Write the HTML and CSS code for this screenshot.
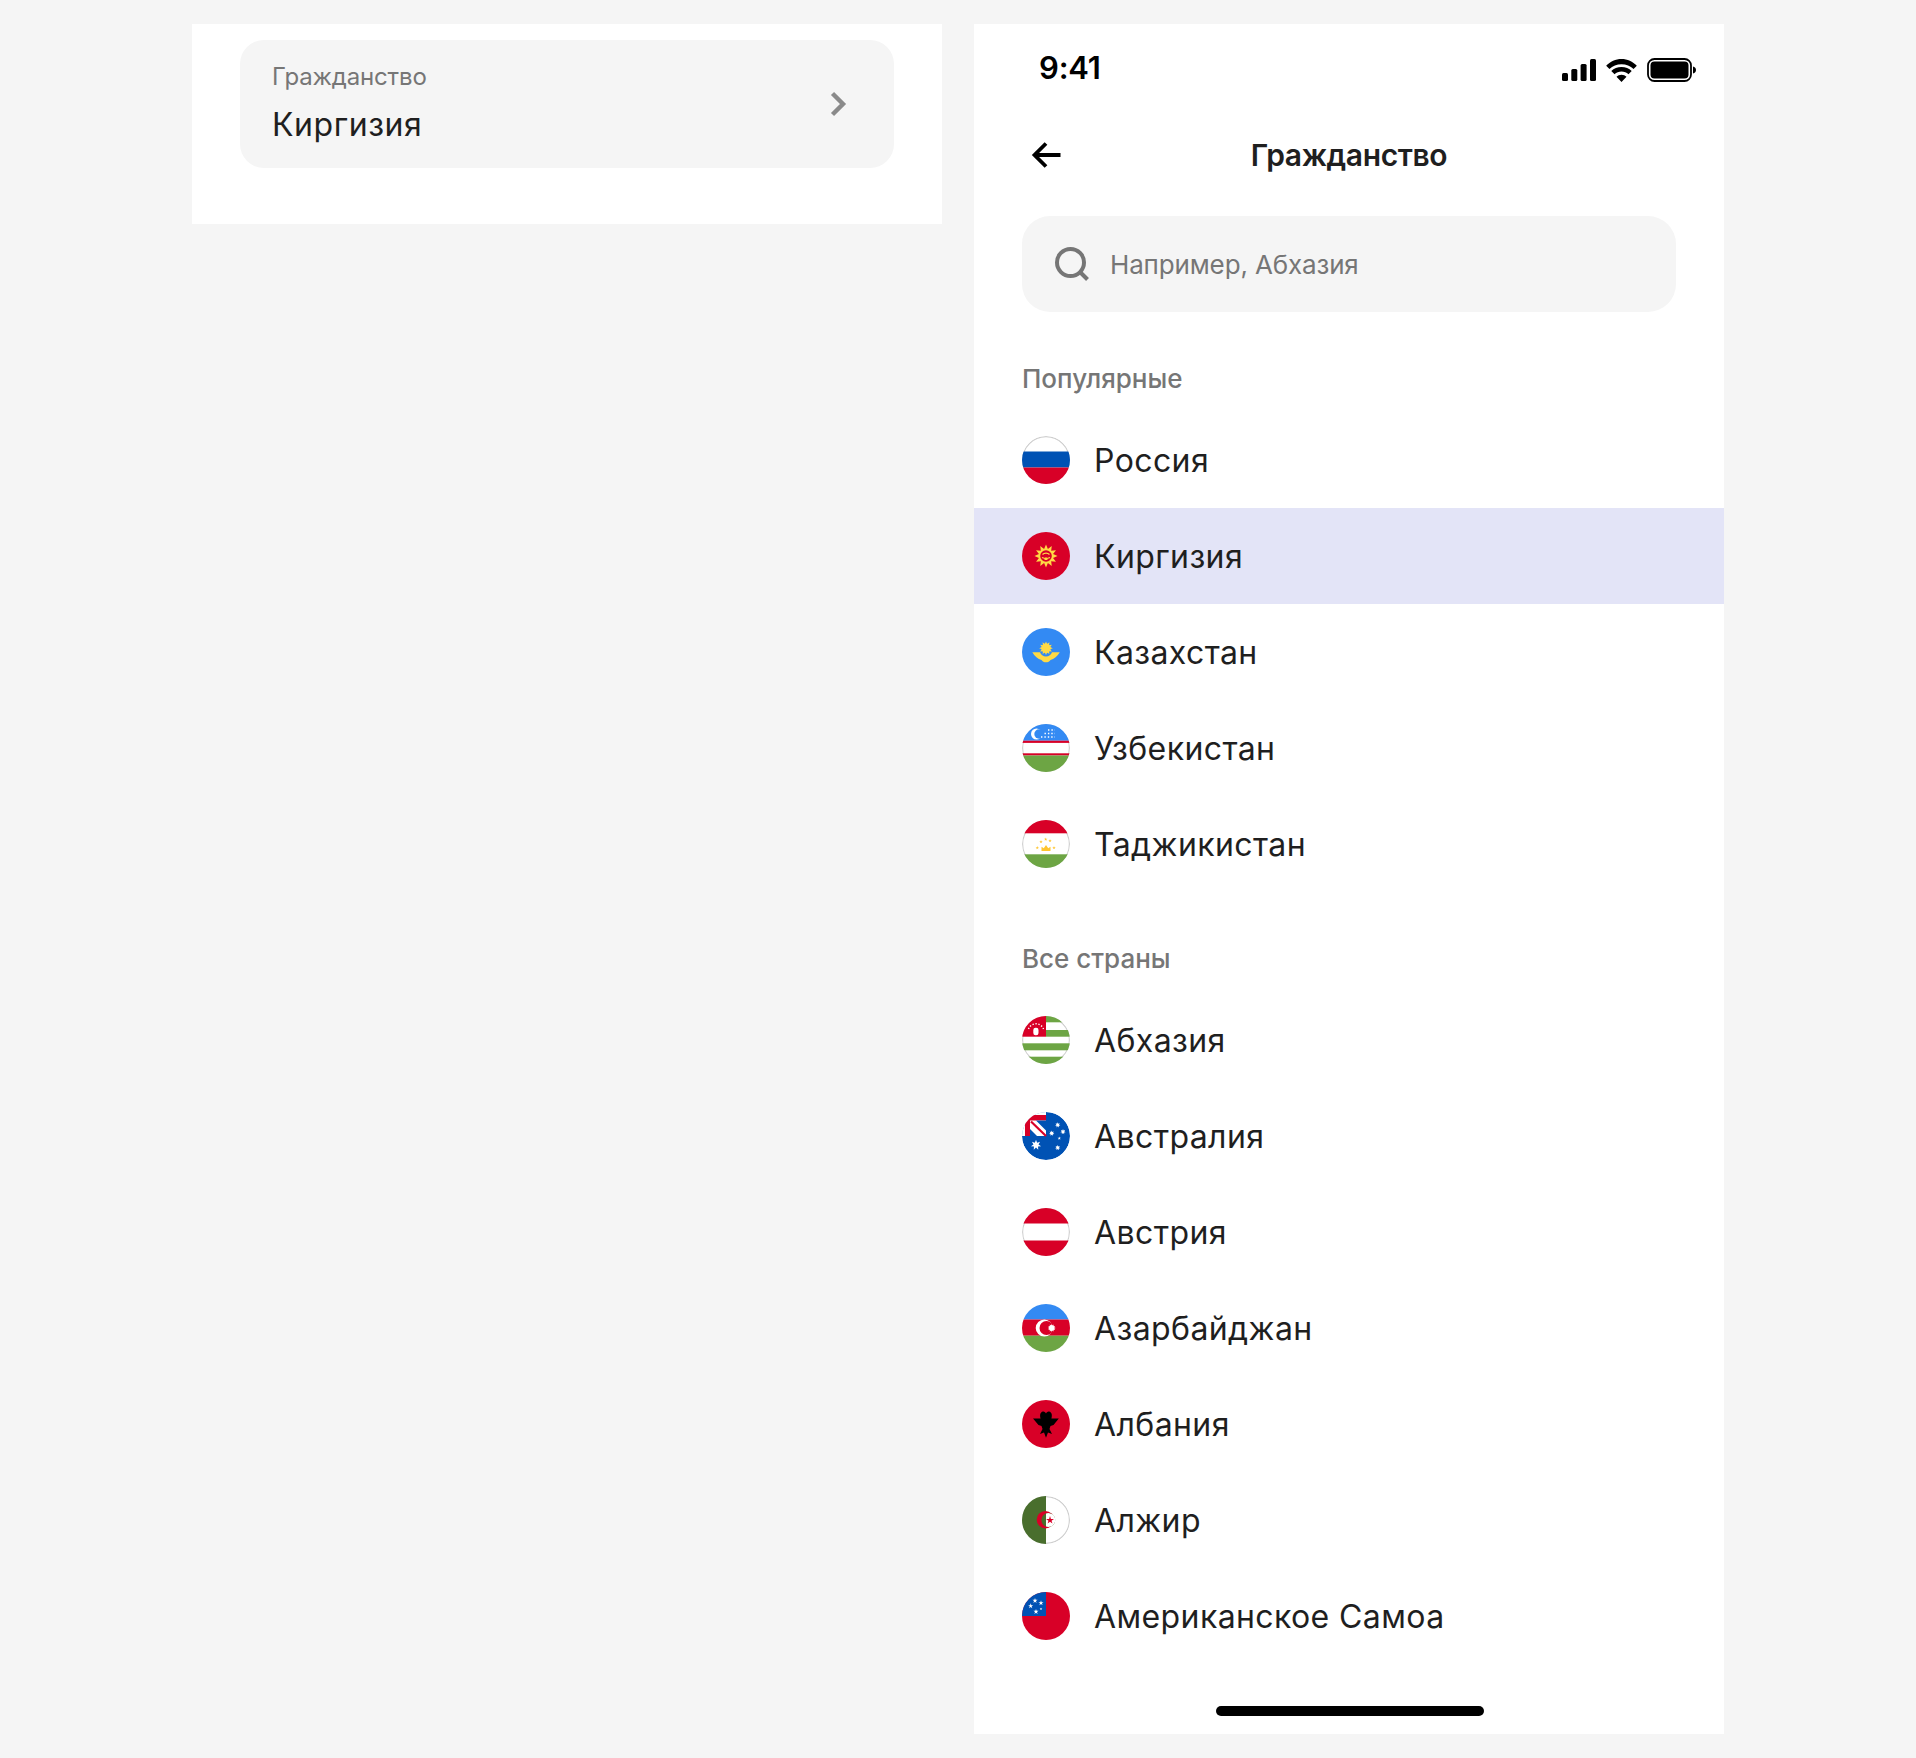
FILE: index.html
```html
<!DOCTYPE html>
<html lang="ru">
<head>
<meta charset="utf-8">
<title>Гражданство</title>
<link rel="stylesheet" href="styles.css">
</head>
<body>
<svg class="defs" aria-hidden="true">
  <defs>
    <polygon id="s12" points="0,-1 .165,-.614 .5,-.866 .45,-.45 .866,-.5 .614,-.165 1,0 .614,.165 .866,.5 .45,.45 .5,.866 .165,.614 0,1 -.165,.614 -.5,.866 -.45,.45 -.866,.5 -.614,.165 -1,0 -.614,-.165 -.866,-.5 -.45,-.45 -.5,-.866 -.165,-.614"/>
    <polygon id="s7" points="0,-1 .217,-.45 .782,-.623 .487,-.111 .975,.223 .391,.312 .434,.901 0,.5 -.434,.901 -.391,.312 -.975,.223 -.487,-.111 -.782,-.623 -.217,-.45"/>
    <polygon id="s5" points="0,-1 .223,-.307 .951,-.309 .361,.117 .588,.809 0,.38 -.588,.809 -.361,.117 -.951,-.309 -.223,-.307"/>
  </defs>
</svg>
<div class="stage">
  <section class="panel panel-left">
    <div class="field">
      <div class="field-text">
        <div class="field-label">Гражданство</div>
        <div class="field-value">Киргизия</div>
      </div>
      <svg class="chevron" viewBox="0 0 16 24"><path d="M2.500 1.500 13 12 2.500 22.500" fill="none" stroke="#8a8a8a" stroke-width="4.400"/></svg>
    </div>
  </section>

  <section class="panel panel-right">
    <div class="status">
      <span class="time">9:41</span>
      <div class="status-icons">
        <svg class="sig" viewBox="0 0 34 22"><rect x="0" y="14" width="6" height="8" rx="1.500"/><rect x="9.300" y="10" width="6" height="12" rx="1.500"/><rect x="18.600" y="5" width="6" height="17" rx="1.500"/><rect x="28" y="0" width="6" height="22" rx="1.500"/></svg>
        <svg class="wifi" viewBox="1 0.500 30 22.500"><path d="M16 5.600c4.600 0 8.700 1.800 11.800 4.700l3.200-3.100C27 3 21.800.6 16 .6S5 3 1 7.200l3.200 3.100C7.300 7.400 11.400 5.600 16 5.600z"/><path d="M16 12.800c2.600 0 5 1 6.800 2.700l3.200-3.200C23.400 9.800 19.900 8.300 16 8.300s-7.400 1.500-10 4l3.200 3.200c1.800-1.700 4.200-2.700 6.800-2.700z"/><path d="M16 15.800c-1.900 0-3.600.8-4.900 2L16 23l4.900-5.200c-1.300-1.200-3-2-4.900-2z"/></svg>
        <svg class="batt" viewBox="0 0 49 24"><rect x="1" y="1" width="43" height="22" rx="6.500" fill="none" stroke="#000" stroke-width="1.800"/><rect x="3.500" y="3.500" width="38" height="17" rx="4"/><path d="M46 8.500c1.800.5 3 1.800 3 3.500s-1.200 3-3 3.500z"/></svg>
      </div>
    </div>

    <header class="nav">
      <svg class="back" viewBox="0 0 32 32"><path d="M30.500 16H5M16 4.500 4.500 16 16 27.500" fill="none" stroke="#000" stroke-width="3.800"/></svg>
      <h1 class="nav-title">Гражданство</h1>
    </header>

    <div class="search">
      <svg class="search-icon" viewBox="0 0 36 36"><circle cx="16.500" cy="16.500" r="13.500" fill="none" stroke="#767676" stroke-width="4"/><path d="M26.500 26.500 33.500 33.500" stroke="#767676" stroke-width="4" fill="none"/></svg>
      <span class="search-text">Например, Абхазия</span>
    </div>

    <div class="section-label">Популярные</div>
    <ul class="list">
      <li class="row">
        <svg class="flag" viewBox="0 0 48 48"><rect width="48" height="48" fill="#fff"/><circle cx="24" cy="24" r="23.400" fill="none" stroke="#cfcfcf" stroke-width="1.200"/><rect y="15.500" width="48" height="16" fill="#0052b4"/><rect y="31.500" width="48" height="16.500" fill="#d80027"/></svg>
        <span>Россия</span>
      </li>
      <li class="row row-active">
        <svg class="flag" viewBox="0 0 48 48"><rect width="48" height="48" fill="#d80027"/><use href="#s12" transform="translate(24 24) scale(11.500)" fill="#ffda44"/><circle cx="24" cy="24" r="5.800" fill="#d80027"/><path d="M20.500 22.500c1.800-1.800 5.200-1.800 7 0M20 25.500l3 1M28 25.500l-3 1" fill="none" stroke="#ffda44" stroke-width="1.300"/><path d="M23 25.500h2l.6 2.500h-3.200z" fill="#ffda44"/></svg>
        <span>Киргизия</span>
      </li>
      <li class="row">
        <svg class="flag" viewBox="0 0 48 48"><rect width="48" height="48" fill="#338af3"/><use href="#s12" transform="translate(24 20.200) scale(6.800)" fill="#ffda44"/><circle cx="24" cy="20.200" r="4.600" fill="#ffda44"/><path d="M10.300 24.300H18C19 27 21 28.500 24 28.500S29 27 30 24.300H37.800C35.500 28.500 32 31 28.500 32 27.500 33.500 26 34.300 24 34.300S20.500 33.500 19.500 32C16 31 12.500 28.500 10.300 24.300z" fill="#ffda44"/></svg>
        <span>Казахстан</span>
      </li>
      <li class="row">
        <svg class="flag" viewBox="0 0 48 48"><rect width="48" height="48" fill="#fff"/><circle cx="24" cy="24" r="23.400" fill="none" stroke="#cfcfcf" stroke-width="1.200"/><rect width="48" height="16.700" fill="#338af3"/><rect y="16.700" width="48" height="2.200" fill="#d80027"/><rect y="29.300" width="48" height="2.200" fill="#d80027"/><rect y="31.500" width="48" height="16.500" fill="#6da544"/><circle cx="14.500" cy="10" r="5.500" fill="#fff"/><circle cx="17" cy="10" r="4.700" fill="#338af3"/><path d="M19 13H33M22.500 9.500H33M26 6H33" stroke="#fff" stroke-width="1.400" stroke-dasharray="1.400 2" fill="none"/></svg>
        <span>Узбекистан</span>
      </li>
      <li class="row">
        <svg class="flag" viewBox="0 0 48 48"><rect width="48" height="48" fill="#fff"/><circle cx="24" cy="24" r="23.400" fill="none" stroke="#cfcfcf" stroke-width="1.200"/><rect width="48" height="13.300" fill="#d80027"/><rect y="34.300" width="48" height="13.700" fill="#6da544"/><path d="M19.500 31V26.800l2.300 1.400L24 25l2.200 3.200 2.300-1.400V31z" fill="#ffc52e"/><g fill="#ffc52e"><use href="#s5" transform="translate(15.300 27.700) scale(1.800)"/><use href="#s5" transform="translate(19 21.700) scale(1.800)"/><use href="#s5" transform="translate(23.700 19.300) scale(1.800)"/><use href="#s5" transform="translate(28 20.700) scale(1.800)"/><use href="#s5" transform="translate(32 27.700) scale(1.800)"/></g></svg>
        <span>Таджикистан</span>
      </li>
    </ul>

    <div class="section-label">Все страны</div>
    <ul class="list">
      <li class="row">
        <svg class="flag" viewBox="0 0 48 48"><rect width="48" height="48" fill="#fff"/><circle cx="24" cy="24" r="23.400" fill="none" stroke="#cfcfcf" stroke-width="1.200"/><rect x="24" y="0" width="24" height="6.300" fill="#6da544"/><rect x="24" y="14" width="24" height="6.700" fill="#6da544"/><rect y="27.300" width="48" height="7" fill="#6da544"/><rect y="40.700" width="48" height="7.300" fill="#6da544"/><rect width="24" height="20.700" fill="#d80027"/><rect x="11.300" y="11.800" width="5.200" height="7.400" rx="2.300" fill="#fff"/><path d="M6.500 13A8 8 0 0 1 21.500 13" fill="none" stroke="#fff" stroke-width="1.400" stroke-dasharray="1.300 1.700"/></svg>
        <span>Абхазия</span>
      </li>
      <li class="row">
        <svg class="flag" viewBox="0 0 48 48"><circle cx="24" cy="24" r="24" fill="#0052b4"/><rect width="24" height="24" fill="#fff"/><path d="M3 24V8a5 5 0 0 1 5-5H24V24z" fill="#d80027"/><rect x="8" y="8.500" width="16" height="15.500" fill="#fff"/><path d="M14 8.500H24V18.500z" fill="#0052b4"/><path d="M8 17V24H15z" fill="#0052b4"/><path d="M9 9.500 24 24" stroke="#d80027" stroke-width="2.200"/><g fill="#fff"><use href="#s7" transform="translate(14 33) scale(5.200)"/><use href="#s7" transform="translate(35.700 13) scale(2.700)"/><use href="#s7" transform="translate(29.700 21.300) scale(2.700)"/><use href="#s7" transform="translate(41 19.700) scale(2.700)"/><use href="#s5" transform="translate(37.300 26.300) scale(1.800)"/><use href="#s7" transform="translate(35.700 35.700) scale(2.700)"/></g></svg>
        <span>Австралия</span>
      </li>
      <li class="row">
        <svg class="flag" viewBox="0 0 48 48"><rect width="48" height="48" fill="#fff"/><circle cx="24" cy="24" r="23.400" fill="none" stroke="#cfcfcf" stroke-width="1.200"/><rect width="48" height="15.500" fill="#d80027"/><rect y="32.500" width="48" height="15.500" fill="#d80027"/></svg>
        <span>Австрия</span>
      </li>
      <li class="row">
        <svg class="flag" viewBox="0 0 48 48"><rect width="48" height="15.500" fill="#338af3"/><rect y="15.500" width="48" height="16.200" fill="#d80027"/><rect y="31.700" width="48" height="16.300" fill="#6da544"/><circle cx="22.300" cy="24" r="8.600" fill="#fff"/><circle cx="24.500" cy="24" r="7" fill="#d80027"/><use href="#s12" transform="translate(29.700 24) scale(4)" fill="#fff"/><circle cx="29.700" cy="24" r="2.400" fill="#fff"/></svg>
        <span>Азарбайджан</span>
      </li>
      <li class="row">
        <svg class="flag" viewBox="0 0 48 48"><rect width="48" height="48" fill="#d80027"/><path d="M11 18.500 18.600 18.600C17.600 15.500 18 12 21 11.500 22.500 11.300 23.500 12.500 24 13.500 24.500 12.500 25.500 11.300 27 11.500 30 12 30.400 15.500 29.400 18.600L36.800 18.500 31.500 25 28.500 26 27.500 29 30 34 26 32.500 24 37.800 22 32.500 18 34 20.500 29 19.500 26 16.500 25z" fill="#000"/></svg>
        <span>Албания</span>
      </li>
      <li class="row">
        <svg class="flag" viewBox="0 0 48 48"><rect width="48" height="48" fill="#fff"/><circle cx="24" cy="24" r="23.400" fill="none" stroke="#cfcfcf" stroke-width="1.200"/><rect width="24" height="48" fill="#496e2d"/><circle cx="23.400" cy="23.700" r="8.700" fill="#d80027"/><circle cx="26.300" cy="24" r="6.900" fill="#496e2d"/><path d="M24 17.500A6.900 6.900 0 1 1 24 30.500z" fill="#fff"/><use href="#s5" transform="translate(28 24.200) scale(4.200)" fill="#d80027"/></svg>
        <span>Алжир</span>
      </li>
      <li class="row">
        <svg class="flag" viewBox="0 0 48 48"><rect width="48" height="48" fill="#d80027"/><rect width="24" height="24" fill="#0052b4"/><g fill="#fff"><use href="#s5" transform="translate(13 8.700) scale(2.700)"/><use href="#s5" transform="translate(19 11) scale(2.700)"/><use href="#s5" transform="translate(8.700 14) scale(2.700)"/><use href="#s5" transform="translate(14 19.700) scale(2.700)"/><use href="#s5" transform="translate(19 17) scale(1.400)"/></g></svg>
        <span>Американское Самоа</span>
      </li>
    </ul>
    <div class="home-bar"></div>
  </section>
</div>
</body>
</html>
```
FILE: styles.css
```css
* { box-sizing: border-box; }
html, body { margin: 0; padding: 0; }
body {
  width: 1916px;
  height: 1758px;
  background: #f5f5f5;
  font-family: Inter, "Noto Sans", sans-serif;
  color: #1f1f1f;
}
.defs { display: block; width: 0; height: 0; }
.stage {
  display: flex;
  align-items: flex-start;
  gap: 32px;
  padding: 24px 192px;
}
.panel { width: 750px; background: #fff; flex: none; }
.panel-left { height: 200px; padding: 16px 48px; }
.panel-right { height: 1710px; display: flex; flex-direction: column; }

.field {
  height: 128px;
  background: #f5f5f5;
  border-radius: 24px;
  padding: 0 48px 2px 32px;
  display: flex;
  align-items: center;
  justify-content: space-between;
}
.field-label { font-size: 24px; line-height: 32px; color: #767676; letter-spacing: -.15px; }
.field-value { font-size: 32px; line-height: 40px; margin-top: 12px; letter-spacing: .55px; }
.chevron { width: 16px; height: 24px; margin-top: 2px; overflow: visible; }

.status {
  height: 88px;
  padding: 0 28px 2px 65px;
  display: flex;
  align-items: center;
  justify-content: space-between;
  flex: none;
}
.time { font-size: 31px; font-weight: 600; color: #000; letter-spacing: -.2px; }
.status-icons { display: flex; align-items: center; gap: 10px; margin-top: 6px; }
.status-icons svg { display: block; fill: #000; }
.sig { width: 34px; height: 22px; }
.wifi { width: 31px; height: 23px; }
.batt { width: 49px; height: 24px; }

.nav {
  height: 88px;
  padding-bottom: 2px;
  display: flex;
  align-items: center;
  justify-content: center;
  position: relative;
  flex: none;
}
.back { position: absolute; left: 56px; top: 27px; width: 32px; height: 32px; }
.nav-title { margin: 0; font-size: 30px; font-weight: 600; letter-spacing: -.4px; color: #1f1f1f; }

.search {
  margin: 16px 48px 0;
  height: 96px;
  background: #f5f5f5;
  border-radius: 28px;
  padding: 0 32px;
  display: flex;
  align-items: center;
  gap: 20px;
  flex: none;
}
.search-icon { width: 36px; height: 36px; }
.search-text { font-size: 26px; color: #767676; letter-spacing: -.15px; }

.section-label {
  padding: 0 48px;
  margin: 51px 0 17px;
  font-size: 26px;
  line-height: 32px;
  color: #767676;
  font-weight: 500;
  flex: none;
}

.list { list-style: none; margin: 0; padding: 0; }
.row {
  height: 96px;
  display: flex;
  align-items: center;
  gap: 24px;
  padding: 0 48px;
  font-size: 32px;
  letter-spacing: .4px;
}
.row-active { background: #e3e4f7; }
.flag { width: 48px; height: 48px; border-radius: 50%; display: block; flex: none; overflow: hidden; }

.home-bar {
  width: 268px;
  height: 10px;
  border-radius: 5px;
  background: #000;
  margin: auto auto 18px 242px;
}
```
